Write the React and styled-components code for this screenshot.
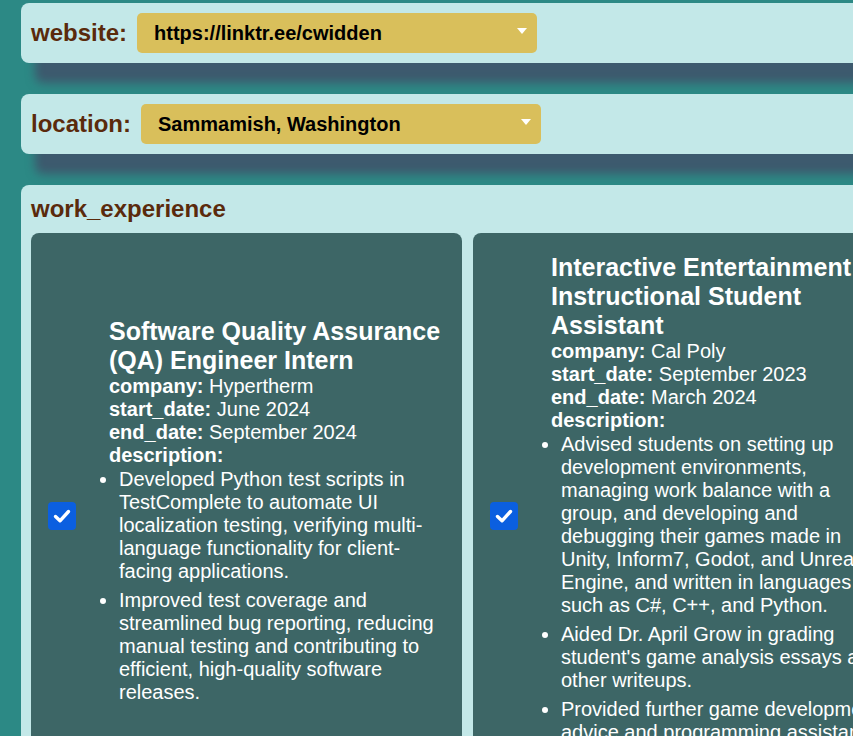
import React from 'react';
import styled, { createGlobalStyle } from 'styled-components';

const COLORS = {
  page: '#2c8985',
  panel: '#c3e8e8',
  shadow: '#3d5a6e',
  label: '#5a2a0c',
  select: '#d9bf5b',
  card: '#3d6666',
  check: '#0b5fe0',
};

const FIELDS = [
  { label: 'website', value: 'https://linktr.ee/cwidden' },
  { label: 'location', value: 'Sammamish, Washington' },
];

const JOBS = [
  {
    title: 'Software Quality Assurance (QA) Engineer Intern',
    company: 'Hypertherm',
    start: 'June 2024',
    end: 'September 2024',
    bullets: [
      'Developed Python test scripts in TestComplete to automate UI localization testing, verifying multi-language functionality for client-facing applications.',
      'Improved test coverage and streamlined bug reporting, reducing manual testing and contributing to efficient, high-quality software releases.',
    ],
  },
  {
    title: 'Interactive Entertainment Instructional Student Assistant',
    company: 'Cal Poly',
    start: 'September 2023',
    end: 'March 2024',
    bullets: [
      'Advised students on setting up development environments, managing work balance with a group, and developing and debugging their games made in Unity, Inform7, Godot, and Unreal Engine, and written in languages such as C#, C++, and Python.',
      "Aided Dr. April Grow in grading student's game analysis essays and other writeups.",
      'Provided further game development advice and programming assistance outside of class hours.',
    ],
  },
];

const GlobalStyle = createGlobalStyle`
  html, body {
    margin: 0;
    overflow: hidden;
    background: ${COLORS.page};
  }
  body {
    font-family: "Liberation Sans", Arial, sans-serif;
  }
`;

const App = () => {
  return (
    <>
      <GlobalStyle />
      <Page>
        {FIELDS.map((f) => (
          <Panel key={f.label}>
            <FieldRow>
              <Label>{f.label}:</Label>
              <Select>
                <span>{f.value}</span>
                <Arrow />
              </Select>
            </FieldRow>
          </Panel>
        ))}
        <Panel>
          <Heading>work_experience</Heading>
          <Cards>
            {JOBS.map((job) => (
              <Card key={job.title}>
                <CheckBox>
                  <svg width="20" height="20" viewBox="0 0 20 20">
                    <path
                      d="M3.5 10.5 L8 14.8 L16.5 5.5"
                      fill="none"
                      stroke="#fff"
                      strokeWidth="3.4"
                      strokeLinecap="round"
                      strokeLinejoin="round"
                    />
                  </svg>
                </CheckBox>
                <Body>
                  <Title>{job.title}</Title>
                  <Line>
                    <Key>company:</Key> {job.company}
                  </Line>
                  <Line>
                    <Key>start_date:</Key> {job.start}
                  </Line>
                  <Line>
                    <Key>end_date:</Key> {job.end}
                  </Line>
                  <Line>
                    <Key>description:</Key>
                  </Line>
                  <List>
                    {job.bullets.map((b) => (
                      <Item key={b}>{b}</Item>
                    ))}
                  </List>
                </Body>
              </Card>
            ))}
          </Cards>
        </Panel>
      </Page>
    </>
  );
};

const Page = styled.div`
  width: 1500px;
  padding: 3px 0 0 21px;
  display: flex;
  flex-direction: column;
  gap: 31px;
`;

const Panel = styled.section`
  background: ${COLORS.panel};
  border-radius: 8px;
  padding: 10px;
  box-shadow: 14px 20px 10px ${COLORS.shadow};
`;

const FieldRow = styled.div`
  display: flex;
  align-items: center;
  gap: 10px;
`;

const Label = styled.span`
  font-size: 24px;
  font-weight: 700;
  color: ${COLORS.label};
`;

const Select = styled.div`
  width: 400px;
  height: 40px;
  box-sizing: border-box;
  padding: 0 10px 0 17px;
  display: flex;
  align-items: center;
  justify-content: space-between;
  background: ${COLORS.select};
  border-radius: 5px;
  font-size: 20px;
  font-weight: 700;
  color: #000;
`;

const Arrow = styled.span`
  width: 0;
  height: 0;
  margin-top: -5px;
  border-left: 5.5px solid transparent;
  border-right: 5.5px solid transparent;
  border-top: 6px solid #fff;
`;

const Heading = styled.h2`
  margin: 0 0 10px;
  font-size: 24px;
  font-weight: 700;
  line-height: 28px;
  color: ${COLORS.label};
`;

const Cards = styled.div`
  display: flex;
  gap: 11px;
  align-items: stretch;
`;

const Card = styled.article`
  width: 431px;
  box-sizing: border-box;
  padding: 20px 17px;
  display: flex;
  align-items: center;
  background: ${COLORS.card};
  border-radius: 8px;
  color: #fff;
`;

const CheckBox = styled.span`
  flex: 0 0 28px;
  height: 28px;
  margin: 4px 33px 0 0;
  display: flex;
  align-items: center;
  justify-content: center;
  background: ${COLORS.check};
  border-radius: 4px;
`;

const Body = styled.div`
  flex: 1;
  min-width: 0;
`;

const Title = styled.h3`
  margin: 0;
  font-size: 25px;
  font-weight: 700;
  line-height: 29px;
`;

const Line = styled.div`
  font-size: 20px;
  line-height: 23px;
`;

const Key = styled.b`
  font-weight: 700;
`;

const List = styled.ul`
  margin: 1px 0 8px;
  padding-left: 10px;
  font-size: 20px;
  line-height: 23px;
`;

const Item = styled.li`
  margin-bottom: 6px;
`;

export default App;
